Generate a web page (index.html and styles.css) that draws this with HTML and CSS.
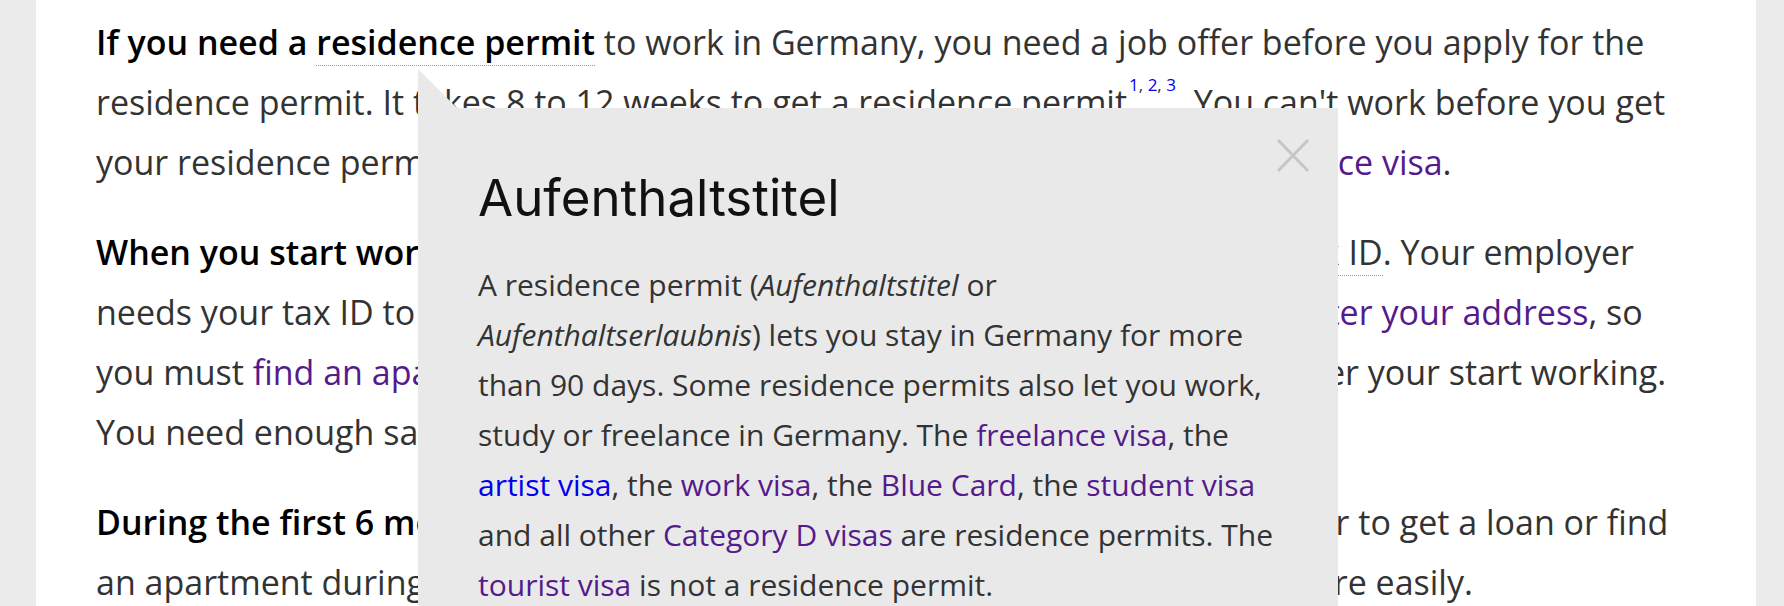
FILE: index.html
```html
<!DOCTYPE html>
<html lang="en">
<head>
<meta charset="utf-8">
<title>Residence permit</title>
<link rel="stylesheet" href="styles.css">
</head>
<body>
<main class="page">
  <p><strong>If you need a <span class="term">residence permit</span></strong> to work in Germany, you need a job offer before you apply for the residence permit. It takes 8 to 12 weeks to get a residence permit<sup class="fn"><a href="#s1">1</a>, <a href="#s2">2</a>, <a href="#s3">3</a></sup>. You can't work before you get your residence permit, unless you already have a job seeker visa or the <a class="v" href="#">freelance visa</a>.</p>
  <p><strong>When you start working</strong>, you need health insurance, a bank account and a <span class="term">tax ID</span>. Your employer needs your tax ID to pay your salary. You get this tax ID by mail after you <a class="v" href="#">register your address</a>, so you must <a class="v" href="#">find an apartment</a> and register your address before or very soon after your start working. You need enough savings to live until you get paid.</p>
  <p><strong>During the first 6 months of the job</strong>, you are on probation, so it's much harder to get a loan or find an apartment during your probation period. After, you can do these things more easily.</p>

  <aside class="tip">
    <span class="tip-arrow"></span>
    <button class="tip-close" aria-label="Close">
      <svg viewBox="0 0 34 35" width="34" height="35"><path d="M2 2 L32 33 M32 2 L2 33" stroke="#c6c6c6" stroke-width="3" fill="none"/></svg>
    </button>
    <h2 class="tip-title">Aufenthaltstitel</h2>
    <p class="tip-text">A residence permit (<em>Aufenthaltstitel</em> or <em>Aufenthaltserlaubnis</em>) lets you stay in Germany for more than 90 days. Some residence permits also let you work, study or freelance in Germany. The <a class="v" href="#">freelance visa</a>, the <a href="#">artist visa</a>, the <a class="v" href="#">work visa</a>, the <a class="v" href="#">Blue Card</a>, the <a class="v" href="#">student visa</a> and all other <a class="v" href="#">Category D visas</a> are residence permits. The <a class="v" href="#">tourist visa</a> is not a residence permit.</p>
  </aside>
</main>
</body>
</html>
```

FILE: styles.css
```css
html, body {
  margin: 0;
  padding: 0;
}
body {
  background: #ebebeb;
  font-family: "Open Sans", "Noto Sans", sans-serif;
  overflow: hidden;
}
.page {
  position: relative;
  box-sizing: border-box;
  width: 1720px;
  min-height: 606px;
  margin-left: 36px;
  padding: 12px 60px 0;
  background: #fff;
  color: #333;
  font-size: 34px;
  line-height: 60px;
}
.page p {
  margin: 0 0 30px;
}
.page strong {
  color: #000;
  font-weight: 600;
}
a {
  color: #0000ee;
  text-decoration: none;
}
a.v {
  color: #551a8b;
}
.term {
  border-bottom: 1px dotted #999;
}
.fn {
  font-size: 17px;
  line-height: 0;
  vertical-align: 24px;
  margin-left: 2px;
}
.tip {
  position: absolute;
  left: 382px;
  top: 108px;
  width: 920px;
  height: 600px;
  box-sizing: border-box;
  padding: 59px 60px 0;
  background: #e9e9e9;
}
.tip-arrow {
  position: absolute;
  left: 0;
  top: -39px;
  width: 0;
  height: 0;
  border-bottom: 39px solid #e9e9e9;
  border-right: 39px solid transparent;
}
.tip-close {
  position: absolute;
  top: 30px;
  right: 28px;
  width: 34px;
  height: 35px;
  padding: 0;
  border: 0;
  background: none;
}
.tip-close svg {
  display: block;
}
.tip-title {
  margin: 0 0 31px;
  font-family: "Inter", "Liberation Sans", sans-serif;
  font-weight: 400;
  font-size: 51px;
  line-height: 62px;
  color: #111;
}
.tip .tip-text {
  margin: 0;
  font-size: 30px;
  line-height: 50px;
  color: #333;
}
```
